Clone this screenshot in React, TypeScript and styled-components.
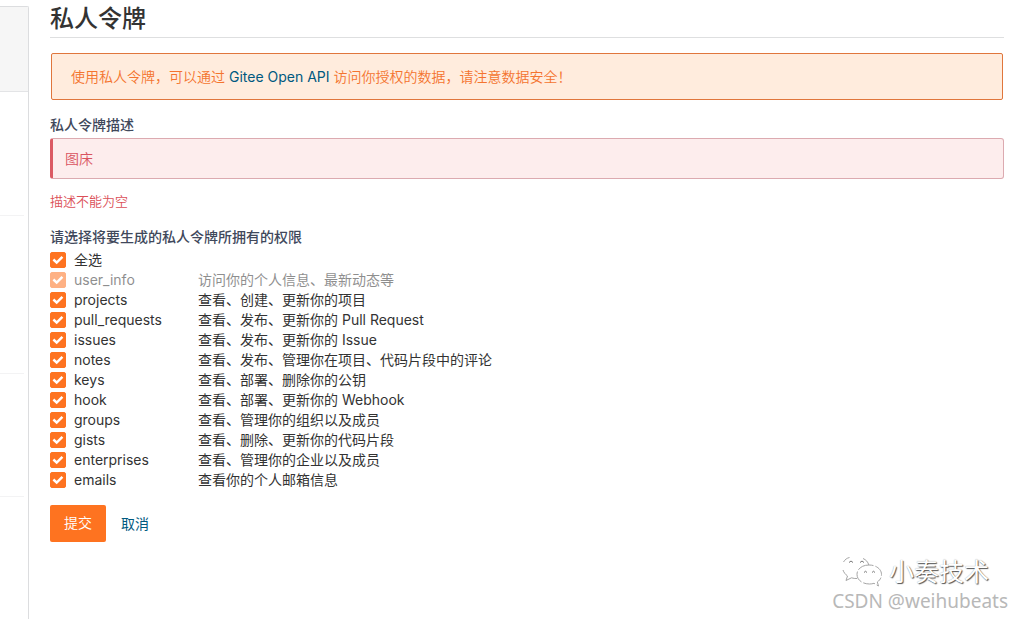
import React, { useState } from 'react';
import styled, { createGlobalStyle } from 'styled-components';

const GlobalStyle = createGlobalStyle`
  *, *::before, *::after { box-sizing: border-box; }
  body {
    margin: 0;
    background: #fff;
    color: #333;
    font: 14px/20px Inter, 'Noto Sans CJK SC', sans-serif;
  }
`;

const Page = styled.div`
  position: relative;
  display: flex;
  min-height: 100vh;
`;

const Sidebar = styled.aside`
  flex: 0 0 29px;
  display: flex;
  flex-direction: column;
  margin-top: 6px;
  border: solid #dcdddf;
  border-width: 1px 1px 0 0;
  border-top-right-radius: 2px;
`;

const SidebarHead = styled.div`
  height: 85px;
  background: #f6f6f6;
  border-bottom: 1px solid #e3e4e6;
`;

const SidebarGroup = styled.div<{ $height: number }>`
  height: ${(p) => p.$height}px;
  margin-right: 4px;
  border-bottom: 1px solid #f3f3f4;
`;

const Main = styled.main`
  flex: 1;
  min-width: 0;
  padding: 4px 19px 20px 21px;
`;

const Title = styled.h1`
  margin: 0;
  padding-bottom: 3px;
  border-bottom: 1px solid #dedfe0;
  font-size: 24px;
  line-height: 30px;
  font-weight: 500;
`;

const Notice = styled.p`
  margin: 15px 1px 0;
  padding: 12px 19px;
  border: 1px solid #e0763c;
  border-radius: 2px;
  background: #ffecdd;
  color: #f4742f;
  line-height: 21px;
  font-weight: 350;
`;

const Link = styled.a`
  color: #005980;
  font-weight: 400;
  text-decoration: none;
`;

const FieldLabel = styled.label`
  display: block;
  margin: 15px 0 3px;
  color: #40485b;
  font-weight: 500;
`;

const TextField = styled.input`
  display: block;
  width: 100%;
  height: 41px;
  padding: 0 12px 2px;
  border: 1px solid #dcaab0;
  border-left: 3px solid #db5a64;
  border-radius: 3px;
  background: #fdeded;
  color: #d9535f;
  font: inherit;
  font-weight: 350;
  outline: none;
`;

const ErrorText = styled.p`
  margin: 12px 0 16px;
  color: #db5058;
  font-size: 13px;
  font-weight: 350;
`;

const Scopes = styled.fieldset`
  margin: 0;
  padding: 0;
  border: 0;
`;

const Legend = styled.legend`
  margin-bottom: 3px;
  padding: 0;
  color: #40485b;
  font-weight: 500;
`;

const ScopeRow = styled.label<{ $muted?: boolean }>`
  display: grid;
  grid-template-columns: 16px 116px 1fr;
  column-gap: 8px;
  align-items: center;
  height: 20px;
  opacity: ${(p) => (p.$muted ? 0.55 : 1)};
`;

const Tick = styled.span`
  display: grid;
  width: 16px;
  height: 16px;
  > * { grid-area: 1 / 1; }
  > svg { pointer-events: none; }
`;

const TickInput = styled.input`
  appearance: none;
  width: 16px;
  height: 16px;
  margin: 0;
  border: 1px solid #fe7320;
  border-radius: 2px;
  background: #fff;
  &:checked { background: #fe7320; }
`;

const ScopeText = styled.span`
  white-space: nowrap;
`;

const Actions = styled.div`
  display: flex;
  align-items: center;
  gap: 15px;
  margin-top: 15px;
`;

const Submit = styled.button`
  height: 37px;
  padding: 0 14px 2px;
  border: 0;
  border-radius: 2px;
  background: #fe7320;
  color: #fff;
  font: inherit;
  font-weight: 350;
`;

const Watermark = styled.div`
  position: absolute;
  right: 15px;
  bottom: 5px;
  display: flex;
  flex-direction: column;
  align-items: flex-end;
`;

const Signature = styled.div`
  display: flex;
  align-items: center;
  gap: 6px;
  margin-right: 19px;
  color: #fff;
  font-size: 25px;
  line-height: 30px;
  text-shadow: 1px 1px 1px #555, 0 0 1px #999;
`;

const Account = styled.div`
  color: #b8b8b8;
  font-family: 'Noto Sans', sans-serif;
  font-size: 19px;
  line-height: 26px;
`;

const scopes = [
  ['user_info', '访问你的个人信息、最新动态等'],
  ['projects', '查看、创建、更新你的项目'],
  ['pull_requests', '查看、发布、更新你的 Pull Request'],
  ['issues', '查看、发布、更新你的 Issue'],
  ['notes', '查看、发布、管理你在项目、代码片段中的评论'],
  ['keys', '查看、部署、删除你的公钥'],
  ['hook', '查看、部署、更新你的 Webhook'],
  ['groups', '查看、管理你的组织以及成员'],
  ['gists', '查看、删除、更新你的代码片段'],
  ['enterprises', '查看、管理你的企业以及成员'],
  ['emails', '查看你的个人邮箱信息'],
];

const optional = scopes.slice(1).map(([name]) => name);

type ScopeProps = {
  name: string;
  text?: string;
  checked: boolean;
  locked?: boolean;
  onToggle: () => void;
};

function Scope({ name, text, checked, locked, onToggle }: ScopeProps) {
  return (
    <ScopeRow $muted={locked}>
      <Tick>
        <TickInput type="checkbox" checked={checked} disabled={locked} onChange={onToggle} />
        <svg width="16" height="16" viewBox="0 0 16 16" fill="none" aria-hidden="true">
          <path d="M3.4 7.5 6.7 10.6 12.400 4.900" stroke="#fff" strokeWidth="2.500" />
        </svg>
      </Tick>
      <ScopeText>{name}</ScopeText>
      {text && <ScopeText>{text}</ScopeText>}
    </ScopeRow>
  );
}

function ChatLogo() {
  return (
    <svg width="42" height="32" viewBox="0 0 42 32" fill="none" stroke="#a5a5a5" strokeWidth="1" aria-hidden="true">
      <path d="M2.500 6C4 3.500 6 2 8.500 1.500M22 2.500c3 1.200 5 3.500 5.800 6.500M2 14c.8 2.500 2.500 4.500 4.500 6L5 24.500l5.500-2.700c1.800.6 3.500.8 5.500.7" />
      <path d="M28 9c-7 0-12 4-12 9.500S21.500 28 28.500 28c1.700 0 3-.2 4.500-.7l4.500 2.700-1.200-4c2.700-1.800 4.200-4.500 4.200-7.500C40.500 13 35 9 28 9Z" fill="#fff" strokeDasharray="12 2" />
      <path d="M8 6.500q2-3 4 0M19 6.500q2-3 4 0M23 16.500q1.500-2.500 3 0M31 16.500q1.500-2.500 3 0" stroke="#777" />
    </svg>
  );
}

export default function App() {
  const [description, setDescription] = useState('图床');
  const [selected, setSelected] = useState<string[]>(optional);
  const all = selected.length === optional.length;

  const toggle = (name: string) =>
    setSelected((now) => (now.includes(name) ? now.filter((n) => n !== name) : [...now, name]));

  return (
    <>
      <GlobalStyle />
      <Page>
        <Sidebar>
          <SidebarHead />
          <SidebarGroup $height={124} />
          <SidebarGroup $height={158} />
          <SidebarGroup $height={123} />
        </Sidebar>
        <Main>
          <Title>私人令牌</Title>
          <Notice>
            使用私人令牌，可以通过 <Link href="#api">Gitee Open API</Link> 访问你授权的数据，请注意数据安全！
          </Notice>
          <form onSubmit={(e) => e.preventDefault()}>
            <FieldLabel htmlFor="description">私人令牌描述</FieldLabel>
            <TextField
              id="description"
              type="text"
              aria-invalid="true"
              aria-describedby="description-error"
              value={description}
              onChange={(e) => setDescription(e.target.value)}
            />
            <ErrorText id="description-error">描述不能为空</ErrorText>
            <Scopes>
              <Legend>请选择将要生成的私人令牌所拥有的权限</Legend>
              <Scope name="全选" checked={all} onToggle={() => setSelected(all ? [] : optional)} />
              {scopes.map(([name, text], i) => (
                <Scope
                  key={name}
                  name={name}
                  text={text}
                  locked={i === 0}
                  checked={i === 0 || selected.includes(name)}
                  onToggle={() => toggle(name)}
                />
              ))}
            </Scopes>
            <Actions>
              <Submit type="submit">提交</Submit>
              <Link href="#cancel">取消</Link>
            </Actions>
          </form>
        </Main>
        <Watermark>
          <Signature>
            <ChatLogo />
            <span>小奏技术</span>
          </Signature>
          <Account>CSDN @weihubeats</Account>
        </Watermark>
      </Page>
    </>
  );
}
